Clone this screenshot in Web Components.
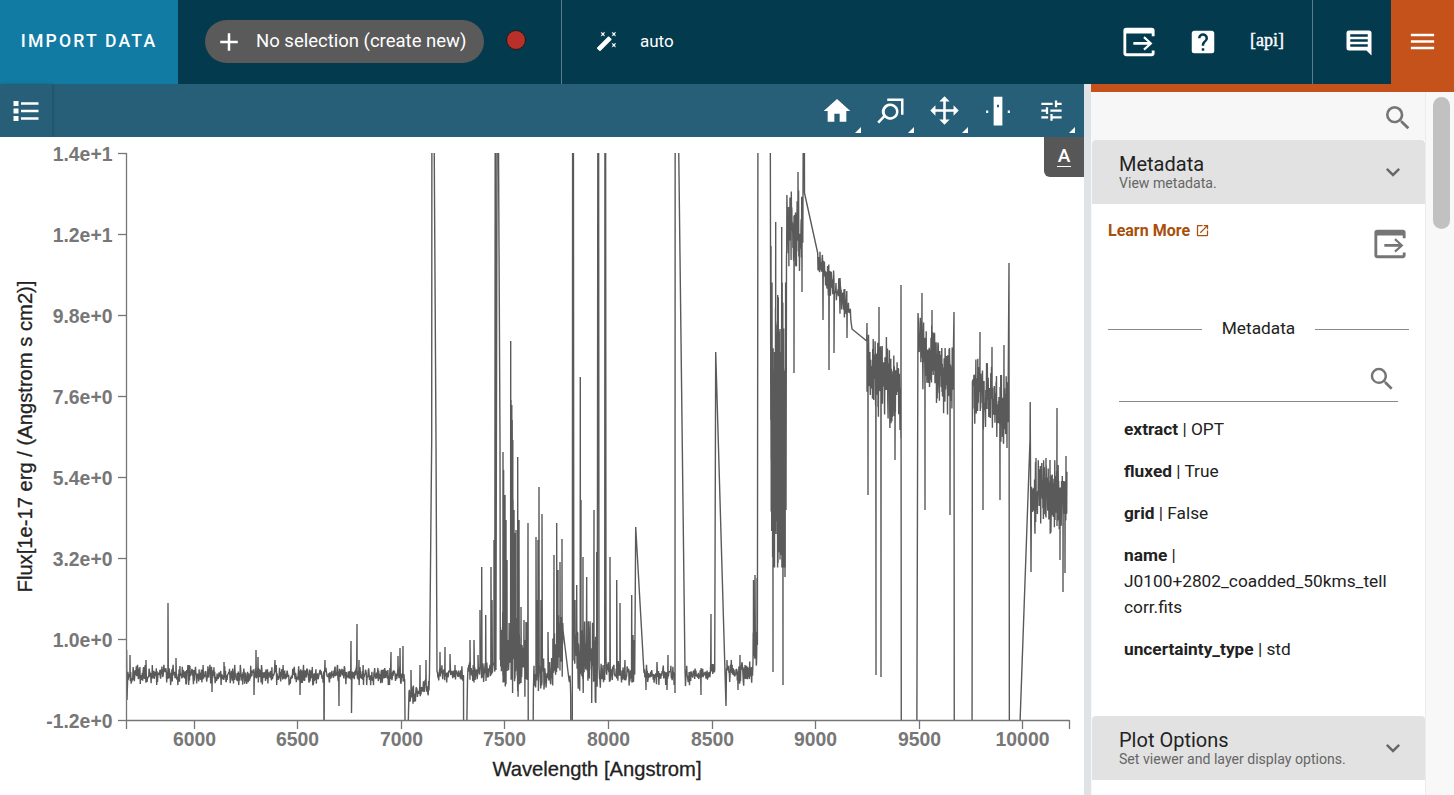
<!DOCTYPE html>
<html>
<head>
<meta charset="utf-8">
<title>Jdaviz</title>
<style>
    html, body { margin: 0; height: 100%; overflow: hidden; background: #fff; font-family: Roboto, "Liberation Sans", sans-serif; }
</style>
</head>
<body>
<jd-app></jd-app>
<script>
(function () {
    const ICONS = {
        plus: 'M19,13H13V19H11V13H5V11H11V5H13V11H19V13Z',
        wand: 'M7.5,5.6L5,7L6.4,4.5L5,2L7.5,3.4L10,2L8.6,4.5L10,7L7.5,5.6M19.5,15.4L22,14L20.6,16.5L22,19L19.5,17.6L17,19L18.4,16.5L17,14L19.5,15.4M22,2L20.6,4.5L22,7L19.5,5.6L17,7L18.4,4.5L17,2L19.5,3.4L22,2M14.37,7.29L16.71,9.63C17.1,10 17.1,10.65 16.71,11.04L5.04,22.71C4.65,23.1 4,23.1 3.63,22.71L1.29,20.37C0.9,20 0.9,19.35 1.29,18.96L12.96,7.29C13.35,6.9 14,6.9 14.37,7.29Z',
        home: 'M10,20V14H14V20H19V12H22L12,3L2,12H5V20H10Z',
        search: 'M9.5,3A6.5,6.5 0 0,1 16,9.5C16,11.11 15.41,12.59 14.44,13.73L14.71,14H15.5L20.5,19L19,20.5L14,15.5V14.71L13.73,14.44C12.59,15.41 11.11,16 9.5,16A6.5,6.5 0 0,1 3,9.5A6.5,6.5 0 0,1 9.5,3M9.5,5C7,5 5,7 5,9.5C5,12 7,14 9.5,14C12,14 14,12 14,9.5C14,7 12,5 9.5,5Z',
        chevron: 'M7.41,8.58L12,13.17L16.59,8.58L18,10L12,16L6,10L7.41,8.58Z',
        tune: 'M3,17V19H9V17H3M3,5V7H13V5H3M13,21V19H21V17H13V15H11V21H13M7,9V11H3V13H7V15H9V9H7M21,13V11H11V13H21M15,9H17V7H21V5H17V3H15V9Z',
        help: 'M15.07,11.25L14.17,12.17C13.45,12.89 13,13.5 13,15H11V14.5C11,13.39 11.45,12.39 12.17,11.67L13.41,10.41C13.78,10.05 14,9.55 14,9C14,7.89 13.1,7 12,7A2,2 0 0,0 10,9H8A4,4 0 0,1 12,5A4,4 0 0,1 16,9C16,9.88 15.64,10.67 15.07,11.25M13,19H11V17H13M19,3H5C3.89,3 3,3.89 3,5V19A2,2 0 0,0 5,21H19A2,2 0 0,0 21,19V5C21,3.89 20.1,3 19,3Z',
        menu: 'M3,6H21V8H3V6M3,11H21V13H3V11M3,16H21V18H3V16Z',
        message: 'M4,2H20A2,2 0 0,1 22,4V22L18,18H4A2,2 0 0,1 2,16V4A2,2 0 0,1 4,2M5,5V7H19V5H5M5,9V11H19V9H5M5,13V15H19V13H5Z',
        link: 'M14,3V5H17.59L7.76,14.83L9.17,16.24L19,6.41V10H21V3M19,19H5V5H12V3H5C3.89,3 3,3.9 3,5V19A2,2 0 0,0 5,21H19A2,2 0 0,0 21,19V12H19V19Z',
        popout: 'M3,2H21A2,2 0 0,1 23,4V8H21V6H3V20H21V18H23V20A2,2 0 0,1 21,22H3A2,2 0 0,1 1,20V4A2,2 0 0,1 3,2M16,8L21.5,13L16,18L15,16.8L18.2,14H8V12H18.2L15,9.2L16,8Z',
        list: 'M2,4H6V8H2V4M8,5H22V7H8V5M2,10H6V14H2V10M8,11H22V13H8V11M2,16H6V20H2V16M8,17H22V19H8V17Z',
        move: 'M12,1L16,5H13V11H19V8L23,12L19,16V13H13V19H16L12,23L8,19H11V13H5V16L1,12L5,8V11H11V5H8L12,1Z',
        zoom: 'M9,2H22V15H20V4H9V2M11.5,6A6.5,6.5 0 1,1 7,17.2L2.5,22L1,20.5L5.6,15.8A6.5,6.5 0 0,1 11.5,6M11.5,8A4.5,4.5 0 1,0 11.5,17A4.5,4.5 0 1,0 11.5,8Z',
        range: 'M8.5,0.5H15.5V23.5H8.5V0.5M11.2,7V9H12.8V7H11.2M2.5,11.5H4.2V13.5H2.5V11.5M19.8,11.5H21.5V13.5H19.8V11.5Z'
    };

    function icon(name, size, extra) {
        return `<svg xmlns="http://www.w3.org/2000/svg" width="${size}" height="${size}" viewBox="0 0 24 24" fill="currentColor" fill-rule="evenodd" style="display:block;${extra || ''}"><path d="${ICONS[name]}"/></svg>`;
    }

    function shadow(el, html) {
        el.attachShadow({ mode: 'open' }).innerHTML = html;
    }

    class JdTopbar extends HTMLElement {
        connectedCallback() {
            shadow(this, `
<style>
    :host { display: flex; height: 84px; background: #033a4e; color: #fff; align-items: stretch; flex: none; }
    .import { width: 178px; background: #127ba3; display: flex; align-items: center; justify-content: center; font-size: 17.6px; font-weight: 500; letter-spacing: 2.2px; padding-bottom: 3px; box-sizing: border-box; }
    .selection { width: 384px; display: flex; align-items: center; padding-left: 27px; box-sizing: border-box; border-right: 1px solid rgba(255,255,255,.35); }
    .pill { width: 279px; height: 43px; border-radius: 22px; background: #5a5a5a; display: flex; align-items: center; padding-left: 9px; box-sizing: border-box; font-size: 18.5px; margin-top: -1px; }
    .pill span { margin-left: 12px; margin-top: -1px; }
    .dot { width: 18px; height: 18px; margin: -5px 0 0 22px; border-radius: 50%; background: #b9302b; border: 1px solid #1c1c1c; }
    .mode { flex: 1; display: flex; align-items: center; padding-left: 34px; font-size: 17px; padding-bottom: 3px; }
    .mode span { margin-left: 22px; }
    .tools { display: flex; align-items: center; border-right: 1px solid rgba(255,255,255,.35); padding-right: 13px; }
    .tool { width: 64px; display: flex; justify-content: center; flex: none; }
    .api { font-family: "Liberation Serif", serif; font-size: 18px; font-weight: 400; margin-top: -3px; -webkit-text-stroke: .4px #fff; }
    .chat { width: 78px; display: flex; align-items: center; padding: 2px 0 0 31px; box-sizing: border-box; }
    .burger { width: 63px; height: 84px; background: #c5511b; display: flex; align-items: center; justify-content: center; padding-bottom: 2px; box-sizing: border-box; }
</style>
<div class="import">IMPORT DATA</div>
<div class="selection">
    <div class="pill">${icon('plus', 30)}<span>No selection (create new)</span></div>
    <div class="dot"></div>
</div>
<div class="mode">${icon('wand', 22)}<span>auto</span></div>
<div class="tools">
    <div class="tool">${icon('popout', 34)}</div>
    <div class="tool">${icon('help', 30)}</div>
    <div class="tool api">[api]</div>
</div>
<div class="chat">${icon('message', 30)}</div>
<div class="burger">${icon('menu', 31)}</div>`);
        }
    }

    class JdToolbar extends HTMLElement {
        connectedCallback() {
            const btn = (name, size, width, corner) => `<div class="btn" style="width:${width}px">${icon(name, size)}${corner ? '<i></i>' : ''}</div>`;
            shadow(this, `
<style>
    :host { display: flex; height: 53px; background: #265f77; color: #fff; align-items: stretch; flex: none; }
    .list { width: 52px; display: flex; align-items: center; justify-content: center; box-shadow: 1px 0 3px rgba(0,0,0,.18); }
    .spacer { flex: 1; }
    .btn { position: relative; display: flex; align-items: center; justify-content: center; }
    .btn i { position: absolute; right: 3px; bottom: 4px; width: 0; height: 0; border-left: 6px solid transparent; border-bottom: 6px solid #fff; }
</style>
<div class="list">${icon('list', 30)}</div>
<div class="spacer"></div>
${btn('home', 32, 54, true)}
${btn('zoom', 30, 53, true)}
${btn('move', 31, 54, true)}
${btn('range', 30, 53, false)}
${btn('tune', 27, 54, true)}
<div style="width:6px"></div>`);
        }
    }

    // noise helpers for the spectrum, seeded so the trace is the same every run
    let seed = 20240611;
    function rnd() {
        seed = (seed + 0x6D2B79F5) | 0;
        let t = Math.imul(seed ^ (seed >>> 15), 1 | seed);
        t = (t + Math.imul(t ^ (t >>> 7), 61 | t)) ^ t;
        return ((t ^ (t >>> 14)) >>> 0) / 4294967296;
    }
    function gauss() {
        return Math.sqrt(-2 * Math.log(rnd() + 1e-9)) * Math.cos(6.2832 * rnd());
    }

    const OFF = -50, LOW = 780;
    // n: noisy run [x0, x1, y0, y1, amp, spikes]   p: raw points
    const TRACE = [
        { p: [[126.6, 650], [127, 700]] },
        { n: [127.5, 405, 675, 675, 4.4, [[130, 655], [168, 603], [212, 692], [254, 695], [256, 650], [258, 657], [224, 662], [146, 660], [176, 658], [300, 695], [275, 660], [324, LOW], [325, 660], [339, 706], [351, 641], [351.5, 713], [357, 624], [359, 660], [391, 652], [398, 656], [400, 648], [403, 646]]] },
        { p: [[405.5, LOW], [407, LOW], [408.5, 712]] },
        { n: [409, 429, 697, 686, 4, [[411, 670], [420, 665], [426, 660], [429, 700]]] },
        { p: [[429.5, 672], [431.7, 440], [432, OFF], [433, OFF], [436, 440], [437, 672]] },
        { n: [437.5, 463, 673, 675, 3.8, [[445, 647], [440, 652], [450, 654], [455, 665]]] },
        { p: [[463.5, 675], [463.7, LOW], [466, LOW], [467.5, 680]] },
        { n: [468, 495, 674, 668, 5, [[470, 640], [474, 640], [478, 655], [480, 610], [481.7, 567], [485.7, 615], [491, 567], [492, 600], [494, 540]]] },
        { p: [[495.3, OFF], [495.6, 440], [495.9, 670], [497.5, OFF], [500, 440], [500.3, 660]] },
        { n: [500.5, 528, 650, 662, 17, [[503, 452], [503.6, 470], [504, 500], [505, 495], [506, 520], [507, 560], [510.7, 341], [511, 400], [511.4, 412], [511.8, 405], [512.2, 420], [512.8, 440], [513, 500], [514, 510], [515, 533], [516, 530], [517.7, 457], [518, 540], [519, 520], [521, 607], [524, 620]]] },
        { p: [[528, 523], [528.3, LOW], [532.8, LOW], [533.4, 690]] },
        { n: [534, 552, 675, 674, 7, [[536, 537], [537, 600], [538, 540], [539, 487], [541, 600], [542, 514], [548, 632]]] },
        { n: [552.5, 563, 655, 640, 16, [[554, 555], [556.7, 523], [557, 590], [558, 570], [560, 562], [562, 539], [563, 580]]] },
        { p: [[563, 630], [569, 680]] },
        { n: [569.5, 570.8, 680, 690, 7, []] },
        { p: [[571, LOW], [572.3, LOW], [572.7, OFF], [573.3, OFF], [573.8, 640]] },
        { n: [574, 597.5, 650, 665, 17, [[575, 600], [576.7, 585], [580.3, 377], [581, 500], [583, 557], [586.7, 577], [591.7, 703], [594, 510], [596.7, 552]]] },
        { p: [[598, OFF], [598.5, OFF], [599, 665]] },
        { n: [599.5, 604, 675, 672, 7, []] },
        { p: [[604.7, 680], [605, OFF], [605.5, OFF], [606, 655]] },
        { n: [606.3, 635, 673, 675, 5.6, [[610, 557], [616.7, 580], [620, 603], [625, 660], [631.7, 595], [633, 635], [634, 640]]] },
        { p: [[635.7, 527], [644, 673]] },
        { n: [644.5, 675, 675, 675, 4.4, [[646, 690], [657, 662], [667, 690], [668, 655]]] },
        { p: [[675, 693], [675.2, OFF], [676.3, OFF], [685, 670]] },
        { n: [685.5, 715, 676, 674, 4.4, [[701, 695], [711, 614]]] },
        { p: [[715.7, 352], [726, 706]] },
        { n: [726.5, 752.5, 672, 674, 5.4, [[727, 660], [738, 690], [740, 655], [745, 665]]] },
        { n: [753, 757.6, 645, 640, 18, [[753.5, 580], [755, 575], [757, 578]]] },
        { p: [[758.1, OFF], [770, OFF], [770.8, 420]] },
        { n: [771, 786, 425, 425, 62, [[771, 246], [773, 672], [775.7, 222], [778, 563], [781.7, 227], [783, 685], [785, 577]]] },
        { n: [786.5, 803, 235, 240, 21, [[787, 201], [794, 373], [798, 172], [802, 292]]] },
        { p: [[804, OFF], [804.5, 193], [817.7, 253]] },
        { n: [818, 851, 262, 315, 7.5, [[823, 320], [829, 370], [834, 353], [840, 278], [847, 338], [851, 338], [851, 284]]] },
        { p: [[852, 329], [866.7, 341]] },
        { n: [867, 901, 362, 395, 19, [[867, 323], [868, 495], [876, 675], [879, 307], [881, 677], [895, 460], [900, 430]]] },
        { p: [[901, 285], [901.3, LOW], [916.7, LOW], [918, 313]] },
        { n: [918.5, 953, 345, 385, 17, [[922, 293], [925, 510], [932, 310], [950, 515]]] },
        { p: [[954, 312], [954.3, LOW], [972, LOW], [972.4, 382]] },
        { n: [973, 1008, 388, 412, 15, [[980, 332], [983, 510], [992, 347], [1000, 500], [1004, 345], [1007, 448]]] },
        { p: [[1009, 263], [1009.4, LOW], [1018, LOW], [1030, 440], [1030.2, 402], [1031, 572]] },
        { n: [1031.5, 1067, 497, 497, 16, [[1036, 458], [1046, 458], [1050, 460], [1057, 408], [1057.5, 483], [1060, 560], [1063, 592], [1065, 573], [1066, 456]]] }
    ];

    function tracePoints() {
        const out = [];
        for (const part of TRACE) {
            if (part.p) { out.push(...part.p); continue; }
            const [x0, x1, y0, y1, amp, spikes] = part.n;
            const queue = spikes.slice().sort((a, b) => a[0] - b[0]);
            const step = amp > 50 ? 0.08 : amp > 10 ? 0.22 : 0.4;
            for (let x = x0; x <= x1; x += step) {
                while (queue.length && queue[0][0] <= x) out.push(queue.shift());
                const c = y0 + (y1 - y0) * (x - x0) / (x1 - x0);
                const tail = rnd() < 0.06 ? 2.1 : 1;
                const y = Math.max(-2.3 * amp, Math.min(2.3 * amp, gauss() * amp * tail));
                out.push([x, c + y]);
            }
        }
        return out.map(p => p[0].toFixed(1) + ',' + p[1].toFixed(1)).join(' ');
    }

    class JdPlot extends HTMLElement {
        connectedCallback() {
            const xTicks = [6000, 6500, 7000, 7500, 8000, 8500, 9000, 9500, 10000];
            const yTicks = ['1.4e+1', '1.2e+1', '9.8e+0', '7.6e+0', '5.4e+0', '3.2e+0', '1.0e+0', '-1.2e+0'];
            let axes = '';
            yTicks.forEach((t, i) => {
                const y = 153.5 + i * 81;
                axes += `<path d="M118 ${y}H127"/><text class="tick" x="112.5" y="${y + 7}" text-anchor="end">${t}</text>`;
            });
            xTicks.forEach(w => {
                const x = Math.round(193.6 + (w - 6000) * 0.2072) + 0.5;
                axes += `<path d="M${x} 720V729"/><text class="tick" x="${x}" y="746" text-anchor="middle">${w}</text>`;
            });
            shadow(this, `
<style>
    :host { display: block; position: relative; flex: 1; background: #fff; overflow: hidden; }
    svg { display: block; }
    .axis path { stroke: #767676; stroke-width: 1.3; fill: none; }
    .tick { font: bold 19.4px "Liberation Sans", Arial, sans-serif; fill: #777; }
    .label { font: 20.2px "Liberation Sans", Arial, sans-serif; fill: #222; stroke: #222; stroke-width: .3; }
    .badge { position: absolute; top: 0; right: 0; width: 40px; height: 40px; background: #575757; border-bottom-left-radius: 6px; color: #fff; display: flex; align-items: center; justify-content: center; font-size: 19px; font-weight: 500; }
    .badge span { border-bottom: 1.5px solid #fff; padding: 0 1px 1px; line-height: 18px; }
</style>
<svg xmlns="http://www.w3.org/2000/svg" width="1084" height="658" viewBox="0 137 1084 658">
    <defs><clipPath id="area"><rect x="127" y="153" width="942" height="567.5"/></clipPath></defs>
    <polyline clip-path="url(#area)" points="${tracePoints()}" fill="none" stroke="#5a5a5a" stroke-width="1.4" stroke-linejoin="bevel"/>
    <g class="axis">
        <path d="M126.5 153V729M126 720.5H1069.5M1069.5 720V729"/>
        ${axes}
    </g>
    <text class="label" x="597" y="776" text-anchor="middle">Wavelength [Angstrom]</text>
    <text class="label" transform="translate(32 436.5) rotate(-90)" text-anchor="middle">Flux[1e-17 erg / (Angstrom s cm2)]</text>
</svg>
<div class="badge"><span>A</span></div>`);
        }
    }

    class JdPanelHeader extends HTMLElement {
        connectedCallback() {
            shadow(this, `
<style>
    :host { display: flex; height: 64px; flex: none; background: #e2e2e2; border-radius: 4px 4px 0 0; align-items: center; padding: 0 18px 0 27px; color: #222; }
    .text { flex: 1; display: flex; flex-direction: column; margin-top: 0; }
    .title { font-size: 20px; line-height: 22px; }
    .sub { font-size: 14.1px; line-height: 16px; color: #666; }
    svg { color: #666; }
</style>
<div class="text">
    <div class="title">${this.getAttribute('title')}</div>
    <div class="sub">${this.getAttribute('sub')}</div>
</div>
${icon('chevron', 28)}`);
        }
    }

    class JdMetaItem extends HTMLElement {
        connectedCallback() {
            shadow(this, `
<style>
    :host { display: block; font-size: 17.3px; line-height: 26px; color: #222; margin-bottom: 16px; overflow-wrap: anywhere; }
    b { font-weight: 700; }
</style>
<b>${this.getAttribute('key')}</b> | <slot></slot>`);
        }
    }

    class JdMetadata extends HTMLElement {
        connectedCallback() {
            shadow(this, `
<style>
    :host { display: block; height: 512px; flex: none; background: #fff; box-sizing: border-box; padding: 0 16px; color: #222; overflow: hidden; }
    .top { display: flex; justify-content: space-between; height: 86px; }
    .learn { margin-top: 17px; display: flex; align-items: flex-start; color: #a84f0c; font-size: 16px; font-weight: 700; line-height: 19px; }
    .learn svg { margin: 2px 0 0 5px; }
    .pop { color: #757575; margin: 23px 2px 0 0; }
    .divider { display: flex; align-items: center; margin: 28px 0 0 0; height: 20px; width: 301px; font-size: 17.3px; }
    .divider i { flex: 1; height: 1px; background: #8a8a8a; margin-top: 2px; }
    .divider span { padding: 0 20px; }
    .search { margin: 21px 0 0 11px; width: 279px; height: 43px; border-bottom: 1px solid #8a8a8a; box-sizing: border-box; display: flex; justify-content: flex-end; align-items: flex-start; color: #757575; padding: 5px 1px 0 0; }
    .items { margin: 14px 0 0 16px; width: 266px; }
</style>
<div class="top">
    <div class="learn">Learn More ${icon('link', 15)}</div>
    <div class="pop">${icon('popout', 34)}</div>
</div>
<div class="divider"><i></i><span>Metadata</span><i></i></div>
<div class="search">${icon('search', 30)}</div>
<div class="items"><slot></slot></div>`);
        }
    }

    class JdSidebar extends HTMLElement {
        connectedCallback() {
            shadow(this, `
<style>
    :host { display: flex; flex-direction: column; width: 363px; flex: none; height: 703px; border-top: 8px solid #c5511b; background: #f8f8f8; overflow: hidden; }
    .wrap { display: flex; flex: 1; min-height: 0; margin-left: 1px; }
    .col { width: 333px; flex: none; background: #fff; display: flex; flex-direction: column; border-right: 1px solid #ececec; }
    .find { height: 48px; flex: none; background: #f7f7f7; display: flex; justify-content: flex-end; align-items: center; padding: 4px 11px 0 0; box-sizing: border-box; color: #757575; }
    .scroll { width: 28px; flex: none; position: relative; background: #f8f8f8; }
    .thumb { position: absolute; left: 7px; top: 5px; width: 17px; height: 132px; background: #c1c1c1; border-radius: 9px; }
</style>
<div class="wrap">
    <div class="col">
        <div class="find">${icon('search', 32)}</div>
        <slot></slot>
    </div>
    <div class="scroll"><div class="thumb"></div></div>
</div>`);
        }
    }

    class JdApp extends HTMLElement {
        connectedCallback() {
            shadow(this, `
<style>
    :host { display: flex; flex-direction: column; width: 1454px; height: 795px; overflow: hidden; }
    .body { display: flex; flex: 1; min-height: 0; }
    .viewer { width: 1084px; flex: none; display: flex; flex-direction: column; }
    .gutter { width: 7px; flex: none; background: #e0e3e6; }
</style>
<jd-topbar></jd-topbar>
<div class="body">
    <div class="viewer">
        <jd-toolbar></jd-toolbar>
        <jd-plot></jd-plot>
    </div>
    <div class="gutter"></div>
    <jd-sidebar>
        <jd-panel-header title="Metadata" sub="View metadata."></jd-panel-header>
        <jd-metadata>
            <jd-meta-item key="extract">OPT</jd-meta-item>
            <jd-meta-item key="fluxed">True</jd-meta-item>
            <jd-meta-item key="grid">False</jd-meta-item>
            <jd-meta-item key="name">J0100+2802_coadded_50kms_tellcorr.fits</jd-meta-item>
            <jd-meta-item key="uncertainty_type">std</jd-meta-item>
        </jd-metadata>
        <jd-panel-header title="Plot Options" sub="Set viewer and layer display options."></jd-panel-header>
    </jd-sidebar>
</div>`);
        }
    }

    customElements.define('jd-topbar', JdTopbar);
    customElements.define('jd-toolbar', JdToolbar);
    customElements.define('jd-plot', JdPlot);
    customElements.define('jd-panel-header', JdPanelHeader);
    customElements.define('jd-meta-item', JdMetaItem);
    customElements.define('jd-metadata', JdMetadata);
    customElements.define('jd-sidebar', JdSidebar);
    customElements.define('jd-app', JdApp);
})();
</script>
</body>
</html>
